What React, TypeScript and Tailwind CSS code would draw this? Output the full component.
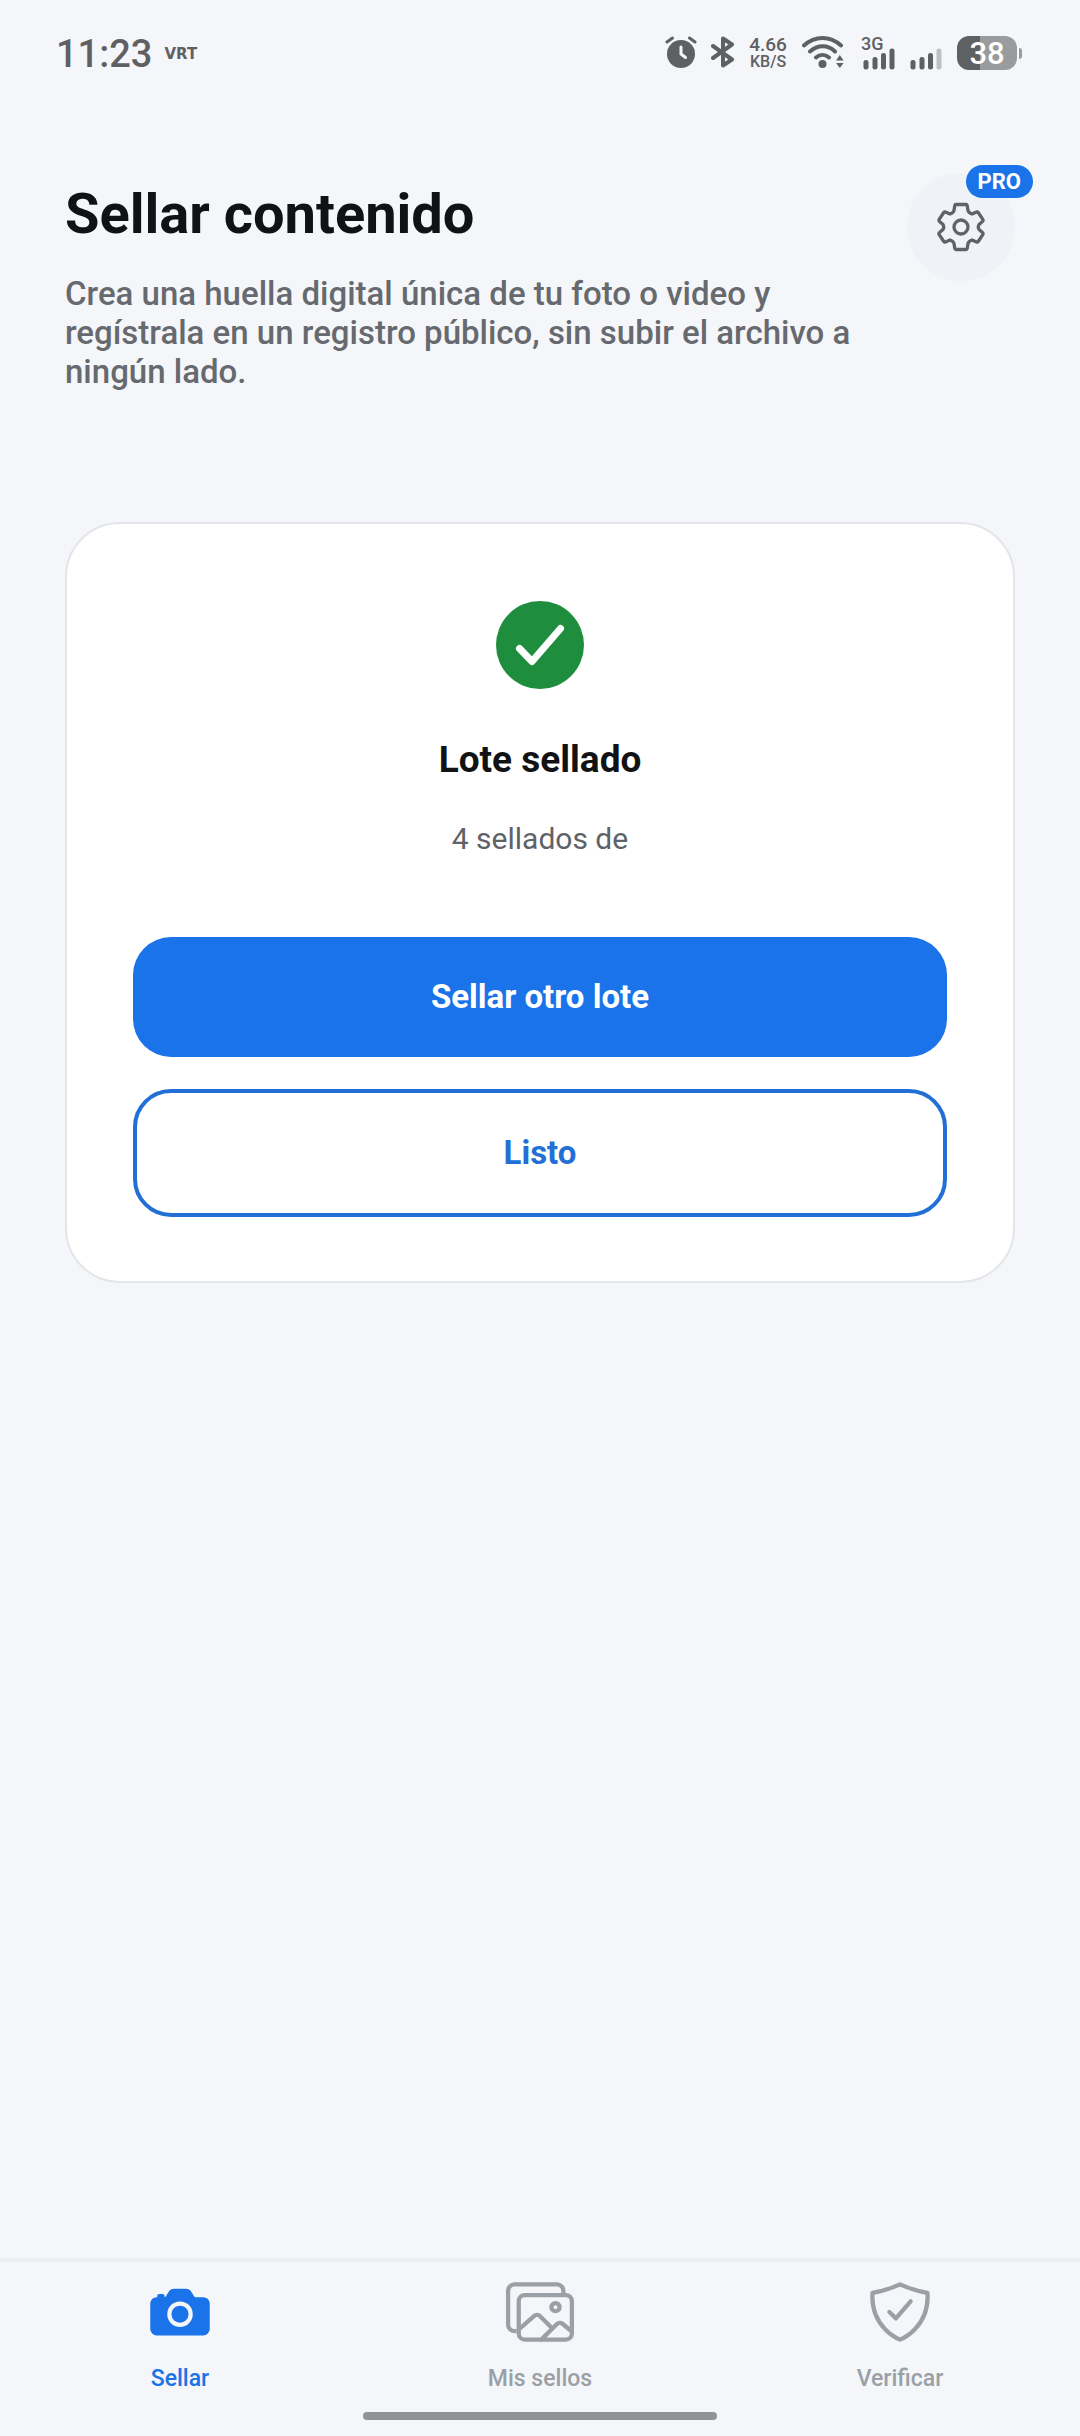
import React from 'react';
import { IoCamera, IoImagesOutline, IoShieldCheckmarkOutline } from 'react-icons/io5';

const AlarmIcon: React.FC = () => (
  <svg className="w-8 h-8" viewBox="0 0 32 32" fill="none" strokeLinecap="round">
    <circle cx="16" cy="18" r="14" fill="#5f6062" />
    <path d="M2 6 7.500 2M30 6 24.500 2" stroke="#5f6062" strokeWidth="3" />
    <path d="M16 11v7l4.500 3.500" stroke="#f4f6fa" strokeWidth="3" strokeLinejoin="round" />
  </svg>
);

const BluetoothIcon: React.FC = () => (
  <svg className="w-6 h-8" viewBox="0 0 24 32" fill="none" stroke="#5f6062" strokeWidth="4" strokeLinecap="round" strokeLinejoin="round">
    <path d="M2 10 21 23.500 12 29.500V2.500L21 8.500 2 22" />
  </svg>
);

const WifiIcon: React.FC = () => (
  <svg className="w-[42px] h-8" viewBox="0 0 42 32" fill="none" stroke="#5f6062" strokeWidth="4" strokeLinecap="round">
    <path d="M2 9.500C13-.5 28-.5 39 9.500M8 15.500c7.500-7 18-7 25 0M14 21.500c4-3.500 9-3.500 13 0" />
    <circle cx="20.500" cy="28" r="4" fill="#5f6062" stroke="none" />
    <path d="M34 24.500 37.800 19l3.800 5.500zM34 27h7.600L37.800 32z" fill="#5f6062" stroke="none" />
  </svg>
);

const SignalIcon: React.FC<{ weak?: boolean }> = ({ weak }) => (
  <svg className="w-8 h-[22px]" viewBox="0 0 32 22" fill="#5f6062">
    <rect x="0.500" y="12" width="5" height="9.500" rx="2.300" />
    <rect x="9.500" y="9" width="5" height="12.500" rx="2.300" />
    <rect x="18" y="5" width="5" height="16.500" rx="2.300" />
    <rect x="26.500" y="0.500" width="5" height="21" rx="2.300" fill={weak ? '#bfc0c3' : '#5f6062'} />
  </svg>
);

const GearIcon: React.FC = () => (
  <svg className="w-[50px] h-[50px]" viewBox="0 0 50 50" fill="none" stroke="#5f6368" strokeWidth="3.300" strokeLinejoin="round">
    <path d="M20 2.500h10Q31 2.500 31.200 3.500L32 8.500Q32.800 11 36 12L40.500 10Q41.500 9.500 42.200 10.500L47 17.700Q47.500 18.700 46.500 19.500L43 22.500Q41.500 25 43 27.500L46.500 30.500Q47.500 31.300 47 32.300L42.200 39.500Q41.500 40.500 40.500 40L36 38Q32.800 39 32 41.500L31.200 46.500Q31 47.500 30 47.500h-10Q19 47.500 18.800 46.500L18 41.500Q17.200 39 14 38L9.500 40Q8.500 40.500 7.800 39.500L3 32.300Q2.500 31.300 3.500 30.500L7 27.500Q8.500 25 7 22.500L3.500 19.500Q2.500 18.700 3 17.700L7.800 10.500Q8.500 9.500 9.500 10L14 12Q17.200 11 18 8.500L18.800 3.500Q19 2.500 20 2.500z" />
    <circle cx="25" cy="25" r="7" />
  </svg>
);

const StatusBar: React.FC = () => (
  <div className="flex items-start justify-between pt-9 pl-14 pr-[58px] text-[#5f6062]">
    <div className="flex items-center gap-3 h-9">
      <span className="text-[38px] leading-9 font-medium">11:23</span>
      <span className="font-['DejaVu_Sans',sans-serif] text-[15px] font-bold">VRT</span>
    </div>
    <div className="flex items-start gap-[15px]">
      <div className="flex gap-[14px]">
        <AlarmIcon />
        <BluetoothIcon />
        <div className="flex flex-col items-center w-[38px] font-medium">
          <span className="text-[19px] leading-[18px]">4.66</span>
          <span className="text-base leading-4">KB/S</span>
        </div>
      </div>
      <WifiIcon />
      <div className="relative h-[34px] flex items-end ml-1">
        <SignalIcon />
        <span className="absolute -left-0.5 top-0 text-[18px] leading-4 font-medium">3G</span>
      </div>
      <div className="h-[34px] flex items-end">
        <SignalIcon weak />
      </div>
      <div className="flex items-center gap-0.5">
        <div className="w-[60px] h-[34px] rounded-xl bg-gradient-to-r from-[#5f6062] from-38% to-[#9a9b9d] to-38% text-white text-[31px] leading-9 font-medium text-center">
          38
        </div>
        <div className="w-[3px] h-[11px] rounded-r bg-[#9a9b9d]"></div>
      </div>
    </div>
  </div>
);

const tabs = [
  { label: 'Sellar', icon: IoCamera, active: true },
  { label: 'Mis sellos', icon: IoImagesOutline, active: false },
  { label: 'Verificar', icon: IoShieldCheckmarkOutline, active: false }
];

const App: React.FC = () => {
  return (
    <div className="min-h-screen flex flex-col bg-[#f4f6fa] font-[Roboto,sans-serif]">
      <StatusBar />

      {/* Header */}
      <header className="flex items-start justify-between pt-[101px] px-[65px]">
        <div className="pt-2">
          <h1 className="text-[56px] leading-[66px] font-bold text-[#111214]">Sellar contenido</h1>
          <p className="mt-[27px] max-w-[810px] text-[33px] leading-[39px] font-medium text-[#66696e]">
            Crea una huella digital única de tu foto o video y regístrala en un registro público, sin subir el archivo a ningún lado.
          </p>
        </div>
        <button type="button" aria-label="Ajustes" className="relative shrink-0 w-[108px] h-[108px] rounded-full bg-[#eff2f7] flex items-center justify-center">
          <GearIcon />
          <span className="absolute -top-2 -right-[18px] px-3 rounded-full bg-[#1a73e8] text-white text-[22px] leading-[33px] font-bold">PRO</span>
        </button>
      </header>

      {/* Result card */}
      <main className="flex-1 px-[65px] pt-[131px]">
        <section className="bg-white border-2 border-[#e3e5e8] rounded-[55px] px-[66px] pt-[77px] pb-16 flex flex-col items-center">
          <svg className="w-[88px] h-[88px]" viewBox="0 0 88 88" fill="none">
            <circle cx="44" cy="44" r="44" fill="#1e8e3e" />
            <path d="M23.500 47.500 36 60.500 64.500 27.500" stroke="#fff" strokeWidth="7" strokeLinecap="round" strokeLinejoin="round" />
          </svg>
          <h2 className="mt-12 text-[37px] leading-[46px] font-bold text-[#111214]">Lote sellado</h2>
          <p className="mt-[38px] text-[30px] leading-9 text-[#5f6368]">4 sellados de</p>
          <button type="button" className="mt-20 w-full h-[120px] rounded-[38px] bg-[#1a73e8] text-white text-[33px] font-bold">
            Sellar otro lote
          </button>
          <button type="button" className="mt-8 w-full h-32 rounded-[38px] border-4 border-[#226fd6] text-[#226fd6] text-[33px] font-bold">
            Listo
          </button>
        </section>
      </main>

      {/* Bottom tabs */}
      <nav className="border-t-4 border-[#eceef2] flex flex-col items-center">
        <div className="w-full grid grid-cols-3 pt-4">
          {tabs.map(({ label, icon: Icon, active }) => (
            <a
              key={label}
              href="#"
              className={`flex flex-col items-center gap-4 ${active ? 'text-[#1a73e8]' : 'text-[#9aa0a6]'}`}
            >
              <Icon className="w-[68px] h-[68px]" />
              <span className="text-[23px] leading-[34px] font-medium">{label}</span>
            </a>
          ))}
        </div>
        <div className="mt-4 mb-4 w-[354px] h-2 rounded-full bg-[#919296]"></div>
      </nav>
    </div>
  );
};

export default App;
